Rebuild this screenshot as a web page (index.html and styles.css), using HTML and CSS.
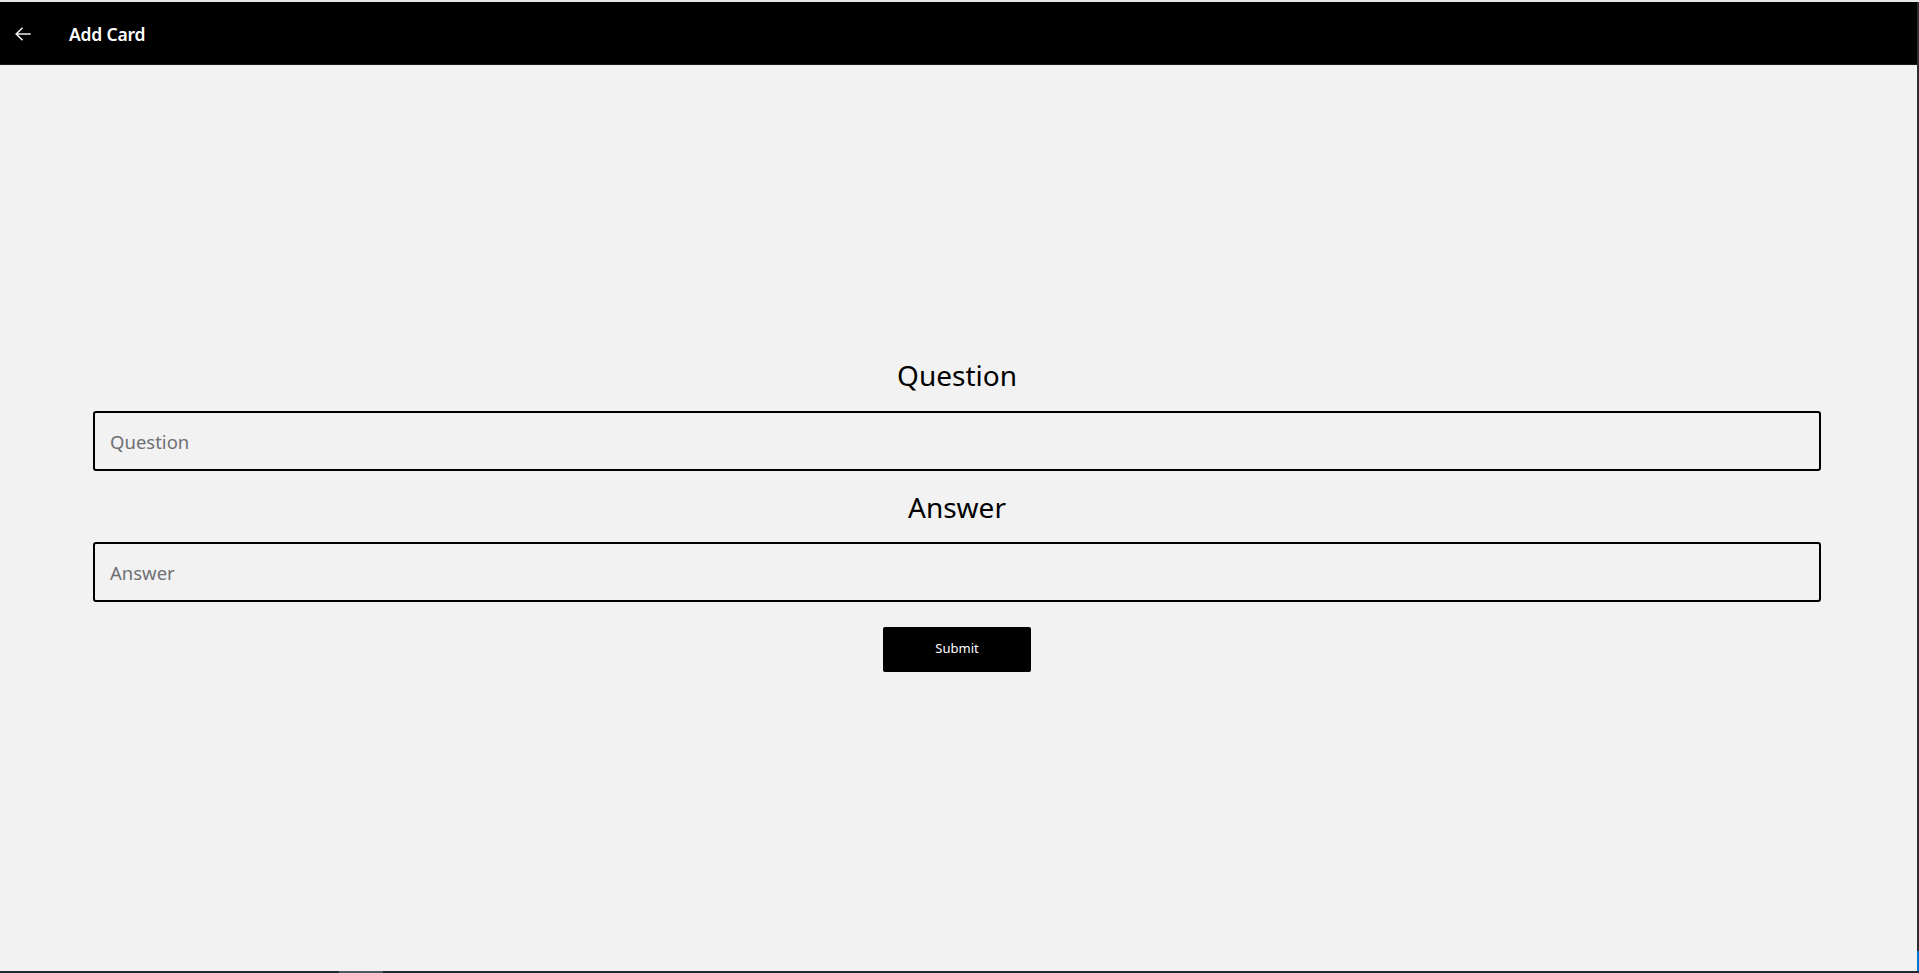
FILE: index.html
```html
<!DOCTYPE html>
<html lang="en">
<head>
<meta charset="utf-8">
<title>Add Card</title>
<link rel="stylesheet" href="styles.css">
</head>
<body>
<div class="window">
  <div class="topline"></div>
  <div class="row">
    <div class="app">
      <header class="titlebar">
        <button class="back" aria-label="Back">
          <svg width="16" height="14" viewBox="0 0 16 14" fill="none" stroke="#fff" stroke-width="1.4" stroke-linecap="square">
            <path d="M15 7H1.5"/>
            <path d="M7 1.2L1.2 7l5.8 5.8"/>
          </svg>
        </button>
        <span class="title">Add Card</span>
      </header>
      <main class="content">
        <form class="form">
          <label class="label" for="q">Question</label>
          <input class="field" id="q" type="text" placeholder="Question">
          <label class="label label-answer" for="a">Answer</label>
          <input class="field" id="a" type="text" placeholder="Answer">
          <button class="submit" type="button">Submit</button>
        </form>
      </main>
    </div>
    <div class="rightedge"><div class="accent"></div></div>
  </div>
  <div class="bottomline"><span class="seg"></span></div>
</div>
</body>
</html>
```

FILE: styles.css
```css
* { box-sizing: border-box; }
html, body {
  margin: 0;
  padding: 0;
  height: 973px;
  overflow: hidden;
  background: #f2f2f2;
  font-family: "Segoe UI", "Noto Sans", "Open Sans", sans-serif;
}
.window {
  display: flex;
  flex-direction: column;
  height: 973px;
}
.topline {
  height: 2px;
  background: #e6e6e6;
}
.row {
  flex: 1;
  display: flex;
  min-height: 0;
}
.app {
  flex: 1;
  display: flex;
  flex-direction: column;
  background: #f2f2f2;
}
.titlebar {
  height: 63px;
  background: #000;
  display: flex;
  align-items: center;
  border-bottom: 1px solid #1a1a1a;
  padding-top: 2px;
}
.back {
  width: 48px;
  height: 48px;
  margin-left: 0;
  padding: 0 0 0 15px;
  background: transparent;
  border: 0;
  display: flex;
  align-items: center;
  justify-content: flex-start;
}
.title {
  margin-left: 21px;
  color: #fff;
  font-weight: 600;
  font-size: 17.5px;
  letter-spacing: -0.2px;
}
.content {
  flex: 1;
  padding: 291px 96px 0 93px;
}
.form {
  display: flex;
  flex-direction: column;
  align-items: center;
}
.label {
  font-size: 28px;
  line-height: 38px;
  color: #000;
  margin-bottom: 17px;
}
.label-answer {
  margin-top: 17px;
  margin-bottom: 16px;
}
.field {
  width: 100%;
  height: 60px;
  border: 2px solid #000;
  border-radius: 3px;
  background: #f2f2f2;
  padding: 0 15px;
  font-family: inherit;
  font-size: 18.5px;
  color: #000;
  outline: none;
}
.field::placeholder {
  color: #6e7074;
}
.submit {
  margin-top: 25px;
  width: 148px;
  height: 45px;
  background: #000;
  color: #fff;
  border: 0;
  border-radius: 2px;
  font-family: inherit;
  font-size: 13px;
  padding: 0 0 3px 0;
}
.rightedge {
  width: 2px;
  background: #2e2e2e;
  display: flex;
  flex-direction: column;
  justify-content: flex-end;
}
.accent {
  height: 20px;
  background: #0078d4;
}
.bottomline {
  height: 2px;
  background: #1e2b36;
  position: relative;
}
.seg {
  position: absolute;
  left: 339px;
  top: 0;
  width: 44px;
  height: 2px;
  background: #4b5a63;
}
```
